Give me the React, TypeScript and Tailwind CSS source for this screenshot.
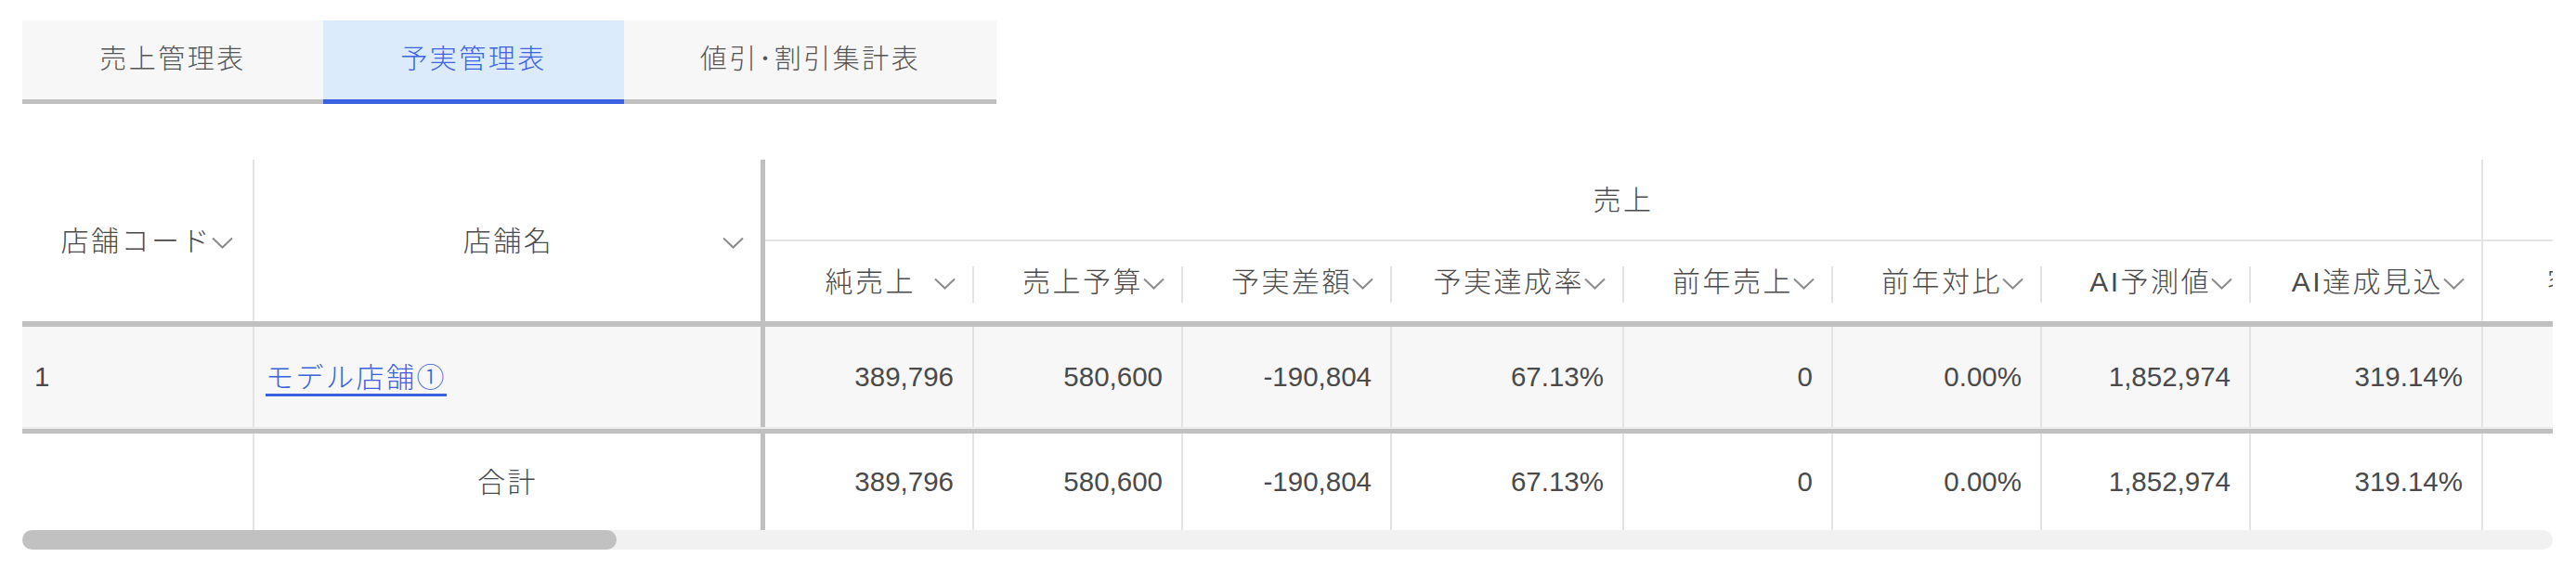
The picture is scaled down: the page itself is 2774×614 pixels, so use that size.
import React from "react";

type Col = {
  label: string;
  width: string;
  gap?: string;
  values: [string, string];
};

const tabs = [
  { label: "売上管理表", width: "w-[324px]", active: false },
  { label: "予実管理表", width: "w-[324px]", active: true },
  { label: "値引･割引集計表", width: "w-[401px]", active: false },
];

// 売上 group
const salesCols: Col[] = [
  { label: "純売上", width: "w-[225px]", gap: "ml-[20px]", values: ["389,796", "389,796"] },
  { label: "売上予算", width: "w-[225px]", values: ["580,600", "580,600"] },
  { label: "予実差額", width: "w-[225px]", values: ["-190,804", "-190,804"] },
  { label: "予実達成率", width: "w-[250px]", values: ["67.13%", "67.13%"] },
  { label: "前年売上", width: "w-[225px]", values: ["0", "0"] },
  { label: "前年対比", width: "w-[225px]", values: ["0.00%", "0.00%"] },
  { label: "AI予測値", width: "w-[225px]", values: ["1,852,974", "1,852,974"] },
  { label: "AI達成見込", width: "w-[250px]", values: ["319.14%", "319.14%"] },
];

function Chevron({ className = "" }: { className?: string }) {
  return (
    <svg
      viewBox="0 0 23 13"
      className={`h-[13px] w-[23px] shrink-0 ${className}`}
      fill="none"
      stroke="#8c8c8c"
      strokeWidth="2"
    >
      <path d="M1 1.5 11.5 11.5 22 1.5" />
    </svg>
  );
}

function DataRow({ index, total }: { index: 0 | 1; total: boolean }) {
  return (
    <div className="flex h-full">
      <div className="flex w-[250px] shrink-0 items-center border-r-2 border-[#e3e3e3] pl-[13px]">
        {!total && "1"}
      </div>
      <div className="flex w-[550px] shrink-0 items-center border-r-[5px] border-[#c0c0c0]">
        {total ? (
          <span className="w-full text-center text-[30px] tracking-[2.5px]">合計</span>
        ) : (
          <a
            href="#"
            className="pl-[12px] text-[30px] tracking-[2.5px] text-[#3b62dc] underline decoration-[3px] underline-offset-[7px]"
          >
            モデル店舗①
          </a>
        )}
      </div>
      {salesCols.map((c) => (
        <div
          key={c.label}
          className={`flex ${c.width} shrink-0 items-center justify-end border-r-2 border-[#e3e3e3] pr-[20px]`}
        >
          {c.values[index]}
        </div>
      ))}
      <div className="w-[177px] shrink-0" />
    </div>
  );
}

export default function App() {
  return (
    <div className="min-h-screen bg-white pl-[24px] pt-[22px] font-['Liberation_Sans','Noto_Sans_CJK_JP',sans-serif] font-light text-[#4a4a4a]">
      {/* tabs */}
      <div className="flex">
        {tabs.map((t) => (
          <div
            key={t.label}
            className={`flex h-[90px] ${t.width} items-center justify-center border-b-[5px] text-[29px] tracking-[2.5px] ${
              t.active
                ? "border-[#3b60e0] bg-[#dcebfc] text-[#3d63e0]"
                : "border-[#c0c0c0] bg-[#f7f7f7] text-[#555555]"
            }`}
          >
            {t.label}
          </div>
        ))}
      </div>

      {/* table */}
      <div className="mt-[60px] w-[2725px]">
        <div className="overflow-hidden text-[29.5px]">
          <div className="w-max">
            {/* header */}
            <div className="flex h-[180px] border-b-[6px] border-[#c0c0c0] text-[30px] tracking-[2.5px]">
              <div className="flex w-[250px] shrink-0 items-center justify-end border-r-2 border-[#e3e3e3] pr-[21px]">
                <span>店舗コード</span>
                <Chevron className="mt-[4px]" />
              </div>
              <div className="grid w-[550px] shrink-0 grid-cols-[1fr_auto_1fr] items-center border-r-[5px] border-[#c0c0c0]">
                <span />
                <span className="pl-[2px]">店舗名</span>
                <Chevron className="mt-[4px] mr-[18px] justify-self-end" />
              </div>
              <div className="flex flex-col">
                <div className="flex h-[88px] border-b-2 border-[#e3e3e3]">
                  <div className="flex w-[1850px] shrink-0 items-center justify-center border-r-2 border-[#e3e3e3]">
                    売上
                  </div>
                  <div className="w-[177px] shrink-0" />
                </div>
                <div className="flex flex-1">
                  {salesCols.map((c, i) => (
                    <div
                      key={c.label}
                      className={`flex ${c.width} shrink-0 items-center ${
                        i === salesCols.length - 1 ? "border-r-2 border-[#e3e3e3]" : ""
                      }`}
                    >
                      <div className="flex flex-1 items-center justify-end pr-[18px]">
                        <span>{c.label}</span>
                        <Chevron className={`mt-[4px] ${c.gap ?? ""}`} />
                      </div>
                      {i !== salesCols.length - 1 && (
                        <div className="mt-[6px] h-[39px] w-[2px] bg-[#e3e3e3]" />
                      )}
                    </div>
                  ))}
                  <div className="flex w-[177px] shrink-0 items-center pl-[69px]">
                    <span>客数</span>
                    <Chevron className="mt-[4px]" />
                  </div>
                </div>
              </div>
            </div>

            {/* data row */}
            <div className="h-[115px] border-b-[5px] border-[#c0c0c0]">
              <div className="h-full border-b-2 border-[#ebebeb] bg-[#f7f7f7]">
                <DataRow index={0} total={false} />
              </div>
            </div>

            {/* total row */}
            <div className="h-[104px] bg-white">
              <DataRow index={1} total />
            </div>
          </div>
        </div>

        {/* scrollbar */}
        <div className="h-[21px] rounded-full bg-[#f1f1f1]">
          <div className="h-full w-[640px] rounded-full bg-[#c1c1c1]" />
        </div>
      </div>
    </div>
  );
}
